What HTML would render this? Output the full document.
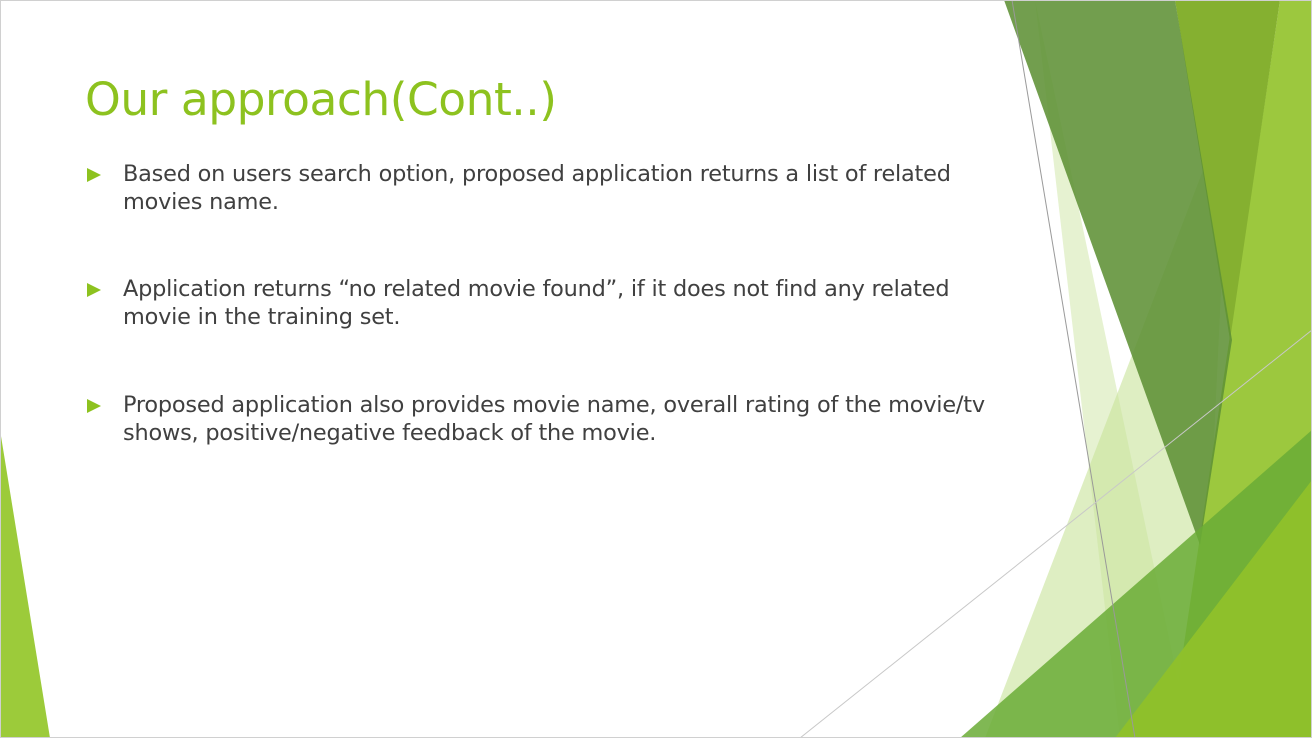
<!DOCTYPE html>
<html><head><meta charset="utf-8"><style>
html,body{margin:0;padding:0;background:#fff;}
.s{position:relative;width:1312px;height:738px;overflow:hidden;background:#fff;font-family:"DejaVu Sans","Liberation Sans",sans-serif;}
.s svg{position:absolute;left:0;top:0;}
h1{position:absolute;left:85px;top:73px;margin:0;font-weight:normal;font-size:45.5px;color:#8dc21f;letter-spacing:-0.5px;white-space:nowrap;}
.b{position:absolute;left:123px;font-size:22.4px;line-height:28px;color:#404040;width:900px;letter-spacing:-0.2px;white-space:nowrap;}
.t{position:absolute;left:87px;width:0;height:0;border-top:7px solid transparent;border-bottom:7px solid transparent;border-left:14px solid #8dc21f;}
</style></head><body><div class="s">
<svg width="1312" height="738" viewBox="0 0 1312 738">
<polygon points="0,430 0,738 50,738" fill="#9ccb3a"/>
<polygon points="1230,100 985,738 1200,738" fill="#c8e29a" opacity="0.6"/>
<polygon points="1035,0 1190,738 1120,738" fill="#c8e29a" opacity="0.45"/>
<polygon points="1280,0 1312,0 1312,738 1170,738" fill="#9cc83e"/>
<polygon points="1175,0 1280,0 1230,340" fill="#85b030"/>
<polygon points="1004,0 1175,0 1232,340 1200,545" fill="#5f9135" opacity="0.88"/>
<polygon points="960,738 1312,430 1312,738" fill="#6aab36" opacity="0.85"/>
<polygon points="1115,738 1312,480 1312,738" fill="#8fc12a" opacity="0.95"/>
<line x1="1012" y1="0" x2="1135" y2="738" stroke="#999" stroke-width="1"/>
<line x1="800" y1="738" x2="1312" y2="330" stroke="#c8c8c8" stroke-width="1"/>
<rect x="0.5" y="0.5" width="1311" height="737" fill="none" stroke="#d0d0d0"/>
</svg>
<h1>Our approach(Cont..)</h1>
<div class="t" style="top:168px"></div>
<div class="b" style="top:160px">Based on users search option, proposed application returns a list of related<br>movies name.</div>
<div class="t" style="top:283px"></div>
<div class="b" style="top:275px">Application returns “no related movie found”, if it does not find any related<br>movie in the training set.</div>
<div class="t" style="top:399px"></div>
<div class="b" style="top:391px">Proposed application also provides movie name, overall rating of the movie/tv<br>shows, positive/negative feedback of the movie.</div>
</div></body></html>
